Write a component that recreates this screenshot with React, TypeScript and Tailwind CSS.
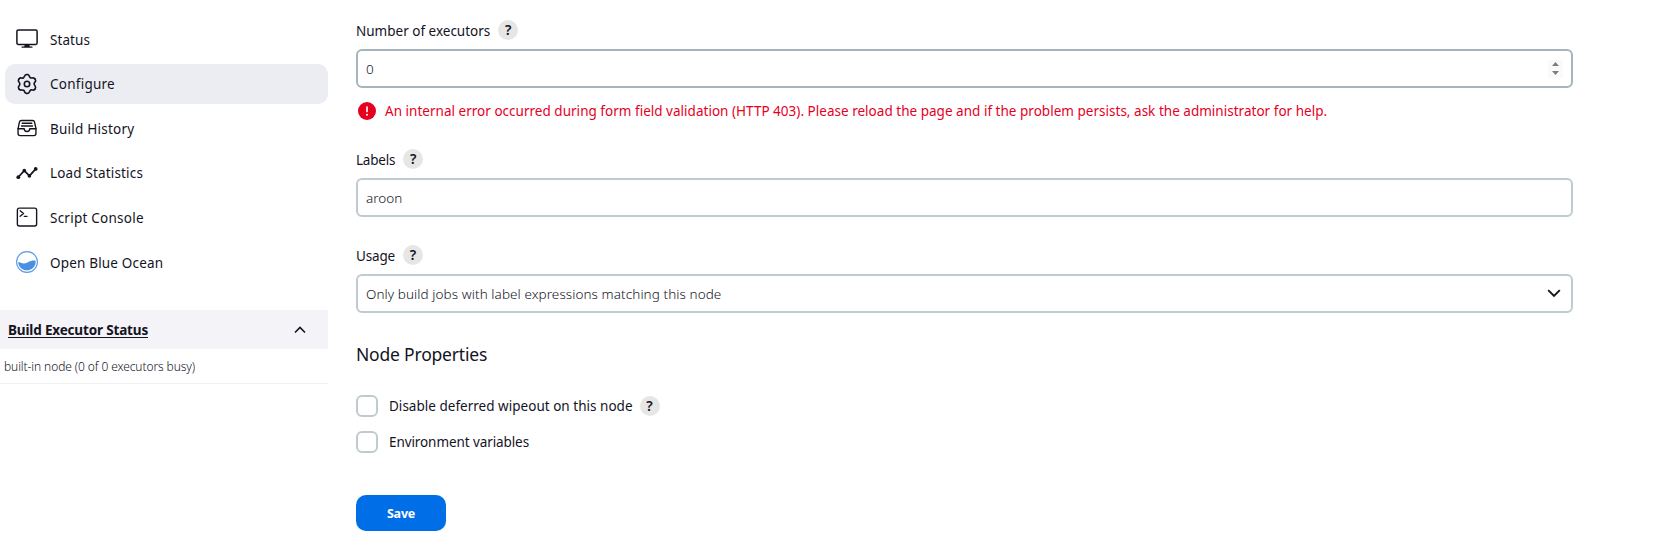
import type { ReactNode } from "react";
import { IoFileTrayFullOutline, IoTerminalOutline } from "react-icons/io5";

function DesktopIcon() {
  return (
    <svg width="22" height="22" viewBox="0 0 22 22" fill="none" stroke="currentColor">
      <rect x="0.9" y="1.9" width="20.2" height="14.6" rx="1.4" strokeWidth="1.5" />
      <path d="M8.7 16.5 8.2 19h5.6l-.5-2.5" fill="currentColor" stroke="none" />
      <path d="M6 19.1h10" strokeWidth="1.3" strokeLinecap="round" />
    </svg>
  );
}

function GearIcon() {
  return (
    <svg width="22" height="22" viewBox="0 0 22 22" fill="none" stroke="currentColor" strokeWidth="1.6" strokeLinecap="round">
      {[0, 60, 120, 180, 240, 300].map((angle) => (
        <path
          key={angle}
          d="M11 1.5C14.2 1.5 12.7 3.75 14.4 4.75C16.1 5.75 17.7 3.6 19.23 6.25"
          transform={`rotate(${angle} 11 11)`}
        />
      ))}
      <circle cx="11" cy="11" r="2.7" />
    </svg>
  );
}

function AnalyticsIcon() {
  return (
    <svg width="22" height="22" viewBox="0 0 22 22" fill="currentColor">
      <path d="M2.2 15.3 8.3 8.6l5.1 5.3 6.4-7" fill="none" stroke="currentColor" strokeWidth="1.7" strokeLinejoin="round" />
      <circle cx="2.3" cy="15.2" r="1.9" />
      <circle cx="8.3" cy="8.6" r="1.8" />
      <circle cx="13.4" cy="13.9" r="1.8" />
      <circle cx="19.7" cy="6.9" r="1.9" />
    </svg>
  );
}

function OceanIcon() {
  return (
    <svg width="22" height="22" viewBox="0 0 22 22">
      <circle cx="11" cy="11" r="10.4" fill="#fff" stroke="#5a9ae6" strokeWidth="1.1" />
      <path d="M2.2 11c2 .1 3.4 1.7 6.2 1.5 3.6-.3 6-3.6 11.2-2.8.6 5.4-3.6 9.6-8.6 9.6-4.8 0-8.6-3.5-8.8-8.3Z" fill="#4a90e2" />
    </svg>
  );
}

const menu: { label: string; icon: ReactNode; cls: string; active?: boolean }[] = [
  { label: "Status", icon: <DesktopIcon />, cls: "pt-px tracking-[0.08px]" },
  { label: "Configure", icon: <GearIcon />, cls: "pt-px tracking-[0.25px]", active: true },
  { label: "Build History", icon: <IoFileTrayFullOutline size={22} />, cls: "pt-px tracking-[0.24px]" },
  { label: "Load Statistics", icon: <AnalyticsIcon />, cls: "pt-px tracking-[0.16px]" },
  { label: "Script Console", icon: <IoTerminalOutline size={22} />, cls: "pt-px tracking-[0.24px]" },
  { label: "Open Blue Ocean", icon: <OceanIcon />, cls: "pt-[3px] tracking-[0.18px]" },
];

function Help() {
  return (
    <button className="flex size-5 shrink-0 items-center justify-center rounded-full bg-[#e6e6e6] text-[14px] leading-none font-semibold text-[#14141f]">
      ?
    </button>
  );
}

function Label({ children }: { children: ReactNode }) {
  return <div className="flex h-5 items-center gap-2">{children}<Help /></div>;
}

export default function App() {
  return (
    <div className="flex h-[542px] w-[1655px] overflow-hidden bg-white font-['Noto_Sans',sans-serif] text-[13.5px] leading-5 text-[#14141f]">
      <aside className="w-[328px] shrink-0 pt-[19px]">
        <nav className="flex flex-col gap-[4.6px] pl-[5px]">
          {menu.map((m) => (
            <a
              key={m.label}
              className={`flex h-10 items-center gap-3 rounded-[10px] pl-[11px] ${m.active ? "bg-[#ecedf3]" : ""}`}
            >
              {m.icon}
              <span className={`whitespace-nowrap ${m.cls}`}>{m.label}</span>
            </a>
          ))}
        </nav>
        <div className="mt-7 flex h-[39px] items-center justify-between bg-[#f3f3f8] pr-[22px] pl-2">
          <span className="mt-[2px] leading-[18px] font-bold tracking-[-0.16px] underline decoration-1 underline-offset-2 [text-decoration-skip-ink:none]">
            Build Executor Status
          </span>
          <svg width="12" height="8" viewBox="0 0 12 8" fill="none" stroke="currentColor" strokeWidth="1.6" className="mt-px">
            <path d="m1 6.5 5-5 5 5" />
          </svg>
        </div>
        <div className="flex h-[35px] items-center border-b border-[#f0f0f2] pt-[2px] pl-1 text-xs font-light tracking-[-0.095px]">
          built-in node (0 of 0 executors busy)
        </div>
      </aside>

      <main className="ml-7 flex w-[1217px] flex-col pt-5">
        <Label><span className="pt-[2px]">Number of executors</span></Label>
        <div className="mt-[9px] flex h-[39px] items-center justify-between rounded-md border-2 border-[#a6b5bd] pr-2 pl-2 font-light">
          0
          <span className="flex h-[18px] w-[15px] flex-col items-center justify-center gap-[5px] bg-[#fafafa]">
            <svg width="7" height="4" viewBox="0 0 6 4" preserveAspectRatio="none" fill="#7d7d7d"><path d="M3 0 6 4H0Z" /></svg>
            <svg width="7" height="4" viewBox="0 0 6 4" preserveAspectRatio="none" fill="#7d7d7d"><path d="M3 4 6 0H0Z" /></svg>
          </span>
        </div>
        <div className="mt-[13px] flex h-5 items-center gap-[9px] pl-[2px] text-[#e6001f]">
          <svg width="18" height="18" viewBox="0 0 18 18">
            <circle cx="9" cy="9" r="9" fill="#e6001f" />
            <path d="M9 5v4.6" stroke="#fff" strokeWidth="1.6" strokeLinecap="round" />
            <circle cx="9" cy="12.8" r="1" fill="#fff" />
          </svg>
          <span className="whitespace-nowrap tracking-[0.02px]">
            An internal error occurred during form field validation (HTTP 403). Please reload the page and if the problem persists, ask the administrator for help.
          </span>
        </div>

        <div className="mt-7"><Label><span className="pt-[2px] tracking-[-0.2px]">Labels</span></Label></div>
        <div className="mt-[9px] flex h-[39px] items-center rounded-md border-2 border-[#bfcbcf] pl-2 font-light">aroon</div>

        <div className="mt-7"><Label><span className="pt-[2px] tracking-[-0.15px]">Usage</span></Label></div>
        <div className="mt-[9px] flex h-[39px] items-center justify-between rounded-md border-2 border-[#bfcbcf] pr-[10px] pl-2 font-light tracking-[0.08px]">
          Only build jobs with label expressions matching this node
          <svg width="14" height="9" viewBox="0 0 14 9" fill="none" stroke="currentColor" strokeWidth="1.9">
            <path d="m1.2 1.2 5.8 5.8 5.8-5.8" />
          </svg>
        </div>

        <h2 className="mt-7 text-[17.5px] leading-[26px] tracking-[-0.2px]">Node Properties</h2>

        <div className="mt-7 flex h-[22px] items-center">
          <span className="size-[22px] rounded-md border-2 border-[#bfcbcf]" />
          <span className="mr-[7px] ml-[11px] tracking-[0.02px]">Disable deferred wipeout on this node</span>
          <Help />
        </div>
        <div className="mt-[14px] flex h-[22px] items-center">
          <span className="size-[22px] rounded-md border-2 border-[#bfcbcf]" />
          <span className="ml-[11px] tracking-[-0.09px]">Environment variables</span>
        </div>

        <button className="mt-[42px] h-9 w-[90px] rounded-[10px] bg-[#006ee6] pt-px text-[12.5px] font-bold tracking-[-0.2px] text-white">Save</button>
      </main>
    </div>
  );
}
